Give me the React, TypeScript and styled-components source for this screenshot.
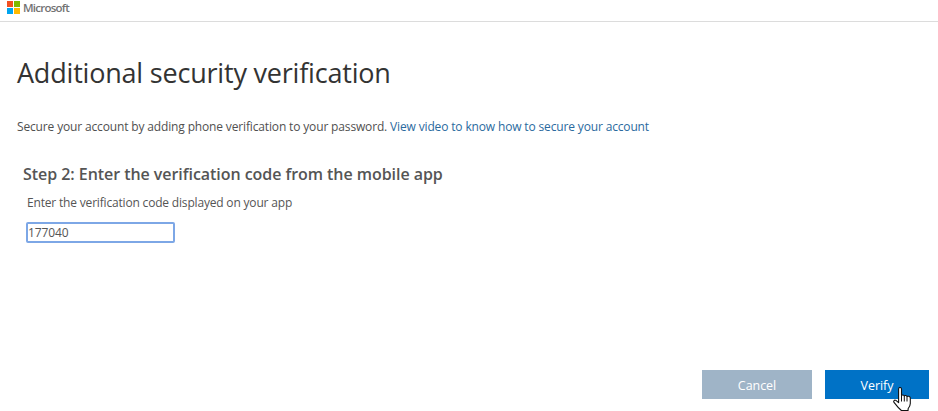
import React from 'react';
import styled, { createGlobalStyle } from 'styled-components';

const Global = createGlobalStyle`
html, body {
  margin: 0;
  padding: 0;
  background: #fff;
  font-family: "Open Sans", "Noto Sans", sans-serif;
}
`;

const Page = styled.div`
width: 938px;
height: 411px;
overflow: hidden;
display: flex;
flex-direction: column;
`;

const Header = styled.div`
height: 21px;
border-bottom: 1px solid #dcdcdc;
padding-left: 7px;
display: flex;
align-items: flex-start;
gap: 3px;
`;

const LogoGrid = styled.div`
display: grid;
grid-template-columns: 6px 6px;
grid-template-rows: 6px 6px;
gap: 1px 1px;
margin-top: 1px;
`;

const LogoSquare = styled.div<{ $color: string }>`
background: ${(p) => p.$color};
`;

const Brand = styled.div`
margin-top: 1px;
font-size: 11.5px;
line-height: 14px;
font-weight: 600;
color: #737373;
letter-spacing: -0.75px;
`;

const Main = styled.div`
flex: 1;
padding: 33px 9px 0 17px;
display: flex;
flex-direction: column;
`;

const Title = styled.h1`
margin: 0;
font-size: 27px;
line-height: 36px;
font-weight: 400;
color: #333;
letter-spacing: -0.2px;
`;

const Intro = styled.div`
margin-top: 28px;
font-size: 12px;
line-height: 16px;
color: #505050;
letter-spacing: -0.15px;
`;

const Link = styled.a`
color: #2a6a9e;
text-decoration: none;
`;

const Step = styled.div`
margin: 29px 0 0 6px;
display: flex;
flex-direction: column;
`;

const StepTitle = styled.h2`
margin: 0;
font-size: 16px;
line-height: 20px;
font-weight: 600;
color: #555;
letter-spacing: -0.05px;
`;

const StepHint = styled.div`
margin: 11px 0 0 4px;
font-size: 12px;
line-height: 16px;
color: #555;
letter-spacing: -0.18px;
`;

const CodeInput = styled.input`
box-sizing: border-box;
margin: 11px 0 0 3px;
width: 149px;
height: 21px;
padding: 0;
border: 2px solid #7da7e6;
border-radius: 2px;
outline: none;
font-family: inherit;
font-size: 12px;
color: #555;
letter-spacing: -0.1px;
`;

const Actions = styled.div`
margin-top: auto;
margin-bottom: 12px;
display: flex;
justify-content: flex-end;
gap: 13px;
`;

const Button = styled.button<{ $primary?: boolean }>`
position: relative;
height: 29px;
width: ${(p) => (p.$primary ? '104px' : '110px')};
padding: 0;
border: none;
background: ${(p) => (p.$primary ? '#0072c6' : '#9fb4c7')};
color: #fff;
font-family: inherit;
font-size: 12.5px;
line-height: 31px;
letter-spacing: -0.05px;
`;

const Pointer = styled.svg`
position: absolute;
left: 68px;
top: 17px;
width: 19px;
height: 24px;
`;

function HandCursor() {
  return (
    <Pointer viewBox="0 0 19 24">
      <path
        d="M5.6 2C5.6.9 6.3.5 7 .5s1.5.5 1.5 1.5V8.6c.4-.9 2.5-.9 2.8.3.6-.7 2.4-.6 2.7.6.7-.5 3-.4 3.3 1.3v5.7c0 2-.9 3.5-2.2 5.3v1.7H8.4C6.4 21.8 3.3 18.3 1 15.3c-.9-1.2.5-2.9 1.900-1.900l2.700 2.300Z"
        fill="#fff"
        stroke="#111"
        strokeWidth="1.1"
        strokeLinejoin="round"
      />
      <path d="M8.5 9v5.500M11.3 9v5.500M14 9.700v4.800" stroke="#111" strokeWidth="1" fill="none" />
    </Pointer>
  );
}

export default function App() {
  return (
    <Page>
      <Global />
      <Header>
        <LogoGrid>
          <LogoSquare $color="#f25022" />
          <LogoSquare $color="#7fba00" />
          <LogoSquare $color="#00a4ef" />
          <LogoSquare $color="#ffb900" />
        </LogoGrid>
        <Brand>Microsoft</Brand>
      </Header>
      <Main>
        <Title>Additional security verification</Title>
        <Intro>
          Secure your account by adding phone verification to your password.{' '}
          <Link>View video to know how to secure your account</Link>
        </Intro>
        <Step>
          <StepTitle>Step 2: Enter the verification code from the mobile app</StepTitle>
          <StepHint>Enter the verification code displayed on your app</StepHint>
          <CodeInput defaultValue="177040" />
        </Step>
        <Actions>
          <Button>Cancel</Button>
          <Button $primary>
            Verify
            <HandCursor />
          </Button>
        </Actions>
      </Main>
    </Page>
  );
}
